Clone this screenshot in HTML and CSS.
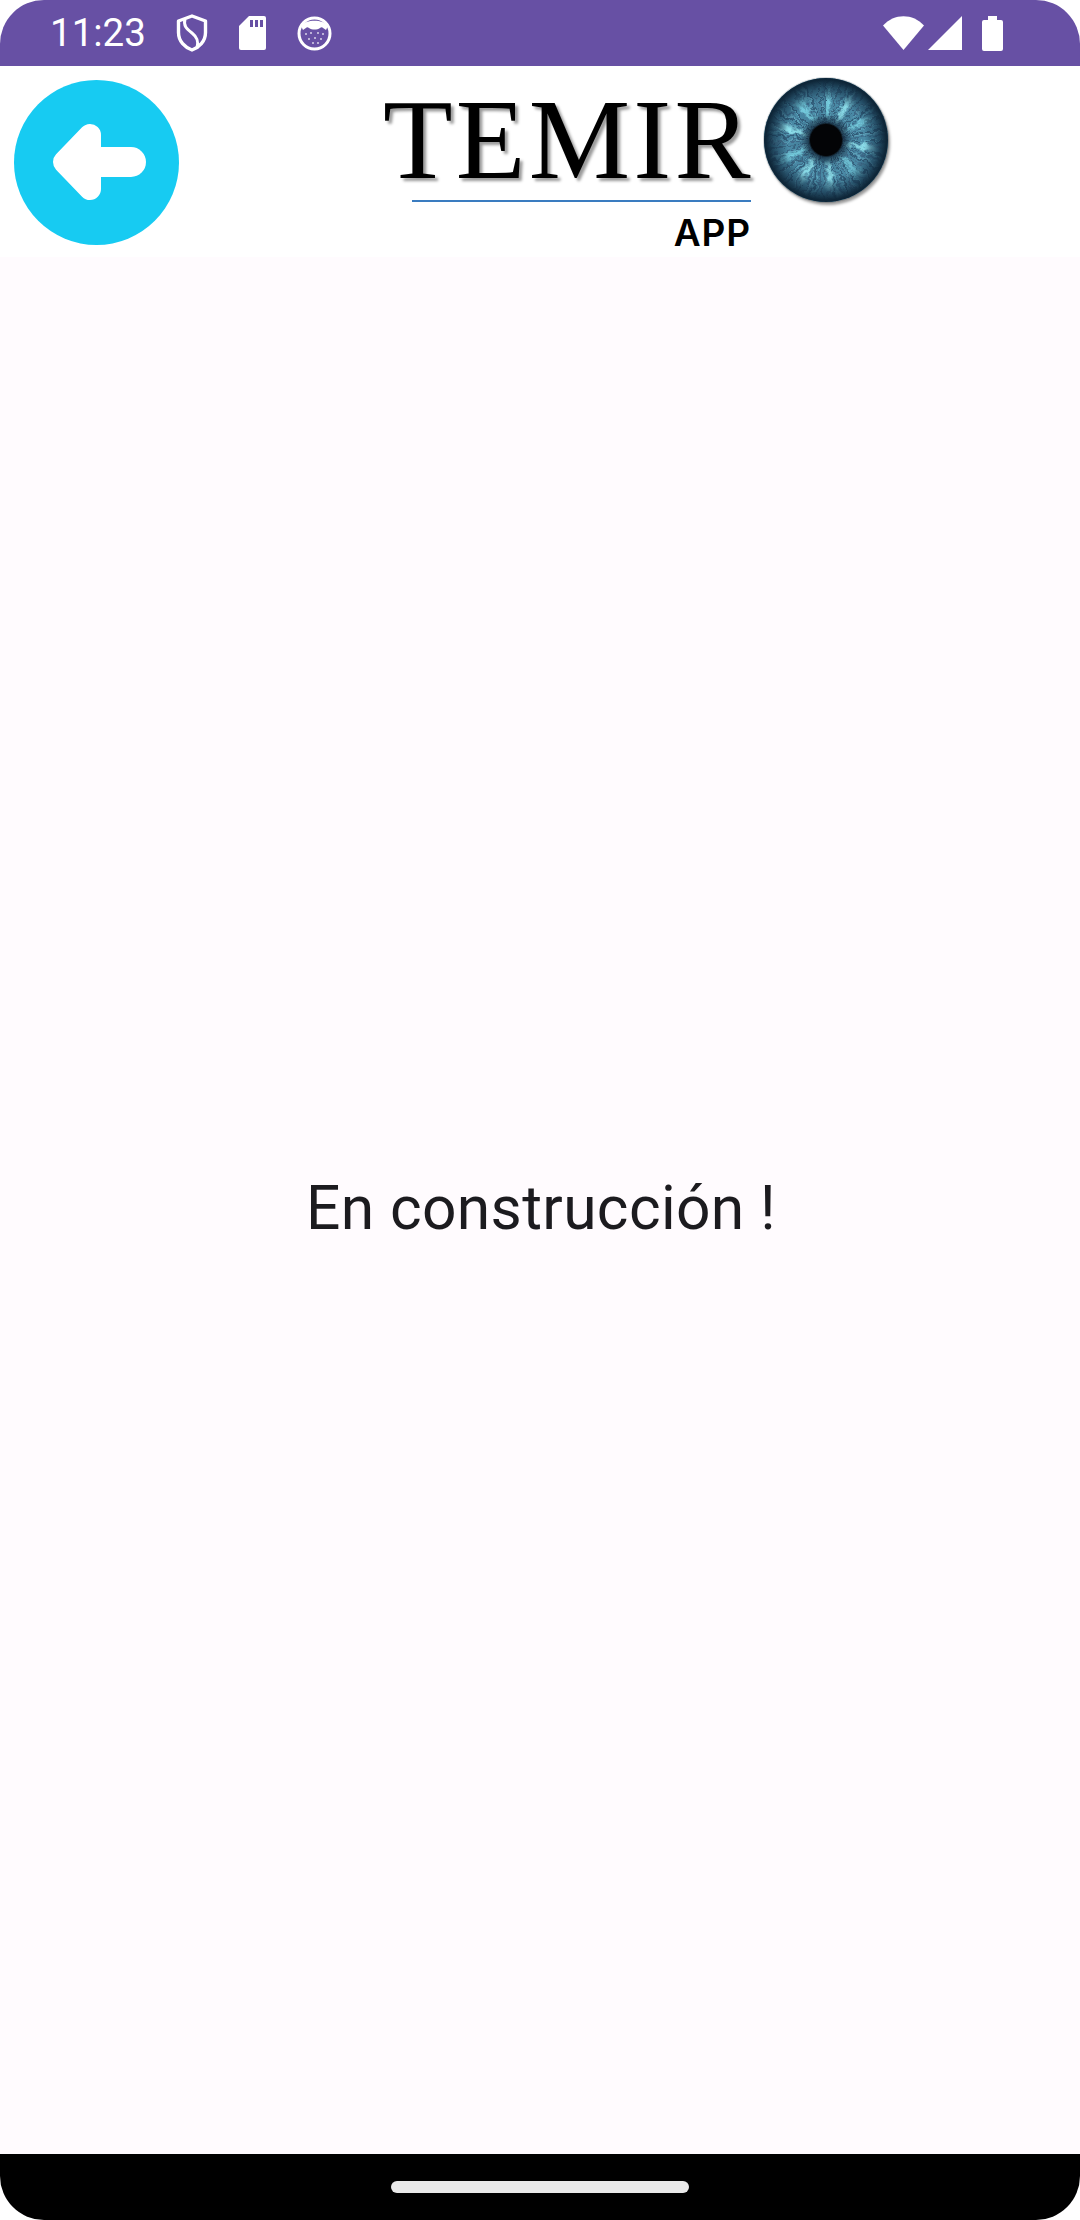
FILE: index.html
```html
<!DOCTYPE html>
<html lang="es">
<head>
    <meta charset="UTF-8">
    <meta name="viewport" content="width=device-width, initial-scale=1.0">
    <title>Temiro App</title>
    <link rel="stylesheet" href="styles.css">
</head>
<body>
    <div class="screen">
        <div class="status-bar">
            <span class="clock">11:23</span>
            <div class="status-left">
                <svg class="ic-shield" viewBox="0 0 32 38"><path d="M16 2 L29.5 7 V18.5 C29.5 27.5 23 33.5 16 36 C9 33.5 2.5 27.5 2.5 18.5 V7 Z" fill="none" stroke="#fff" stroke-width="3.4" stroke-linejoin="round"/><path d="M9 5 C7 12 11 15 16 19 C21 23 23 27 21 34" fill="none" stroke="#fff" stroke-width="3"/></svg>
                <svg class="ic-sd" viewBox="0 0 27 34"><path d="M10 0 H25 a2 2 0 0 1 2 2 V32 a2 2 0 0 1 -2 2 H2 a2 2 0 0 1 -2 -2 V10 Z" fill="#fff"/><path d="M11 4 h3 v7 h-3 z M16 4 h3 v7 h-3 z M21 4 h3 v7 h-3 z" fill="#6750a4"/></svg>
                <svg class="ic-cat" viewBox="0 0 35 35"><circle cx="17.5" cy="17.5" r="15.5" fill="#6750a4" stroke="#fff" stroke-width="3"/><path d="M4 10 C9 3 26 3 31 10 L29 14 C26 12 25 10 23 12 C20 14 15 14 12 12 C10 10 9 12 6 14 Z" fill="#fff"/><g fill="#fff" opacity=".75"><circle cx="9" cy="18" r="1"/><circle cx="14" cy="17" r="1"/><circle cx="21" cy="17" r="1"/><circle cx="26" cy="18" r="1"/><circle cx="12" cy="23" r="1"/><circle cx="18" cy="22" r="1"/><circle cx="24" cy="23" r="1"/><circle cx="16" cy="27" r="1"/><circle cx="21" cy="27" r="1"/></g></svg>
            </div>
            <div class="status-right">
                <svg class="ic-wifi" viewBox="0 0 41 34"><path d="M0 9.5 C11 -3 30 -3 41 9.5 L20.5 34 Z" fill="#fff"/></svg>
                <svg class="ic-signal" viewBox="0 0 34 34"><path d="M34 0 V34 H0 Z" fill="#fff"/></svg>
                <svg class="ic-battery" viewBox="0 0 21 35"><path d="M6 0 H15 V4 H19 a2 2 0 0 1 2 2 V33 a2 2 0 0 1 -2 2 H2 a2 2 0 0 1 -2 -2 V6 a2 2 0 0 1 2 -2 H6 Z" fill="#fff"/></svg>
            </div>
        </div>

        <header class="app-header">
            <div class="back-btn">
                <svg viewBox="0 0 165 165" width="165" height="165">
                    <path d="M50 82 L76 55 V109 Z" fill="#fff" stroke="#fff" stroke-width="22" stroke-linejoin="round"/>
                    <path d="M76 82 H117" stroke="#fff" stroke-width="30" stroke-linecap="round"/>
                </svg>
            </div>
            <div class="logo">
                <div class="logo-text">
                    <div class="logo-name">TEMIR</div>
                    <div class="logo-rule"></div>
                    <div class="logo-app">APP</div>
                </div>
                <div class="eye">
                    <div class="iris-fibres"></div>
                    <div class="iris-light"></div>
                    <div class="iris-edge"></div>
                </div>
            </div>
        </header>

        <main class="content">
            <p class="message">En construcción !</p>
        </main>

        <div class="nav-bar">
            <div class="home-pill"></div>
        </div>
    </div>

    <!-- wobble for the iris fibres -->
    <svg class="defs" width="0" height="0">
        <filter id="wobble" x="-10%" y="-10%" width="120%" height="120%">
            <feTurbulence type="fractalNoise" baseFrequency="0.16" numOctaves="3" seed="11"/>
            <feDisplacementMap in="SourceGraphic" scale="9" xChannelSelector="R" yChannelSelector="G"/>
            <feGaussianBlur stdDeviation="0.5"/>
        </filter>
    </svg>
</body>
</html>
```

FILE: styles.css
```css
html, body {
    margin: 0;
    padding: 0;
    background: #fff;
}

.screen {
    width: 1080px;
    height: 2220px;
    display: flex;
    flex-direction: column;
    overflow: hidden;
    border-radius: 44px;
    background: #fffbfe;
    font-family: Roboto, sans-serif;
}

.status-bar {
    height: 66px;
    flex: none;
    display: flex;
    align-items: center;
    padding: 0 77px 0 50px;
    background: #6750a4;
    color: #fff;
}

.clock {
    font-size: 38.5px;
    line-height: 66px;
}

.status-left {
    display: flex;
    align-items: center;
    gap: 31px;
    margin-left: 30px;
}

.ic-shield { width: 32px; height: 38px; }
.ic-sd { width: 27px; height: 34px; }
.ic-cat { width: 35px; height: 35px; }

.status-right {
    display: flex;
    align-items: center;
    margin-left: auto;
}

.ic-wifi { width: 41px; height: 34px; }
.ic-signal { width: 34px; height: 34px; margin-left: 4px; }
.ic-battery { width: 21px; height: 35px; margin-left: 20px; }

.app-header {
    height: 191px;
    flex: none;
    display: flex;
    align-items: flex-start;
    background: #fff;
}

.back-btn {
    width: 165px;
    height: 165px;
    margin: 14px 0 0 14px;
    border-radius: 50%;
    background: #17cbf2;
}

.back-btn svg {
    display: block;
}

.logo {
    display: flex;
    align-items: flex-start;
    margin: 12px 0 0 204px;
}

.logo-text {
    width: 368px;
    padding-top: 20px;
}

.logo-name {
    font-family: "Liberation Serif", serif;
    font-size: 114px;
    font-kerning: none;
    letter-spacing: 3.2px;
    line-height: 84px;
    color: #000;
    white-space: nowrap;
    text-shadow: 3px 3px 3px rgba(0, 0, 0, 0.4);
}

.logo-rule {
    height: 2px;
    margin: 18px 0 0 29px;
    background: #3a7cc0;
}

.logo-app {
    margin-top: 14px;
    text-align: right;
    font-family: Inter, sans-serif;
    font-size: 37px;
    font-weight: 600;
    letter-spacing: 0.9px;
    line-height: 34px;
    color: #000;
}

.eye {
    position: relative;
    width: 124px;
    height: 124px;
    margin-left: 13px;
    overflow: hidden;
    border-radius: 50%;
    background: #4a8aa6;
    box-shadow: 2px 3px 3px rgba(0, 0, 0, 0.4), 0 0 0 1px #d5d8da;
}

.iris-fibres,
.iris-light,
.iris-edge {
    position: absolute;
    inset: 0;
}

.iris-fibres {
    background:
        repeating-conic-gradient(rgba(40, 70, 100, 0.6) 0deg 2deg, transparent 3deg 6deg, rgba(50, 75, 110, 0.5) 7deg 8deg, transparent 9deg 13deg),
        repeating-conic-gradient(from 5deg, rgba(120, 205, 225, 0.4) 0deg 1deg, transparent 2deg 7deg, rgba(150, 225, 240, 0.3) 8deg 9deg, transparent 10deg 17deg);
    filter: url(#wobble);
    transform: scale(1.15);
}

.iris-light {
    background: conic-gradient(rgba(130, 225, 240, 0.75) 0deg 4deg, transparent 10deg 24deg, rgba(150, 235, 245, 0.8) 28deg 31deg, transparent 38deg 58deg, rgba(130, 225, 240, 0.65) 62deg 65deg, transparent 72deg 95deg, rgba(150, 235, 245, 0.85) 99deg 102deg, transparent 108deg 130deg, rgba(130, 225, 240, 0.65) 134deg 138deg, transparent 145deg 168deg, rgba(150, 235, 245, 0.8) 172deg 175deg, transparent 182deg 205deg, rgba(150, 235, 245, 0.85) 210deg 213deg, transparent 220deg 238deg, rgba(130, 225, 240, 0.75) 243deg 247deg, transparent 254deg 280deg, rgba(150, 235, 245, 0.9) 285deg 288deg, transparent 295deg 318deg, rgba(130, 225, 240, 0.75) 322deg 326deg, transparent 335deg 360deg);
    -webkit-mask: radial-gradient(closest-side, transparent 24%, #000 42%, #000 66%, transparent 88%);
    mask: radial-gradient(closest-side, transparent 24%, #000 42%, #000 66%, transparent 88%);
    filter: url(#wobble);
}

.iris-edge {
    background: radial-gradient(closest-side, #030406 0 25%, rgba(10, 26, 44, 0.7) 28%, rgba(10, 30, 50, 0.08) 42%, transparent 62%, rgba(12, 38, 60, 0.6) 84%, #0e2638 97%, #0e2638 100%);
}

.content {
    flex: 1;
    display: flex;
    justify-content: center;
    align-items: center;
    padding: 5px 0 0 2px;
}

.message {
    margin: 0;
    font-size: 60.5px;
    letter-spacing: 0.36px;
    color: #1c1b1f;
}

.nav-bar {
    height: 66px;
    flex: none;
    display: flex;
    justify-content: center;
    padding-top: 27px;
    box-sizing: border-box;
    background: #000;
}

.home-pill {
    width: 298px;
    height: 12px;
    border-radius: 6px;
    background: #e9e9e9;
}

.defs {
    position: absolute;
}
```
